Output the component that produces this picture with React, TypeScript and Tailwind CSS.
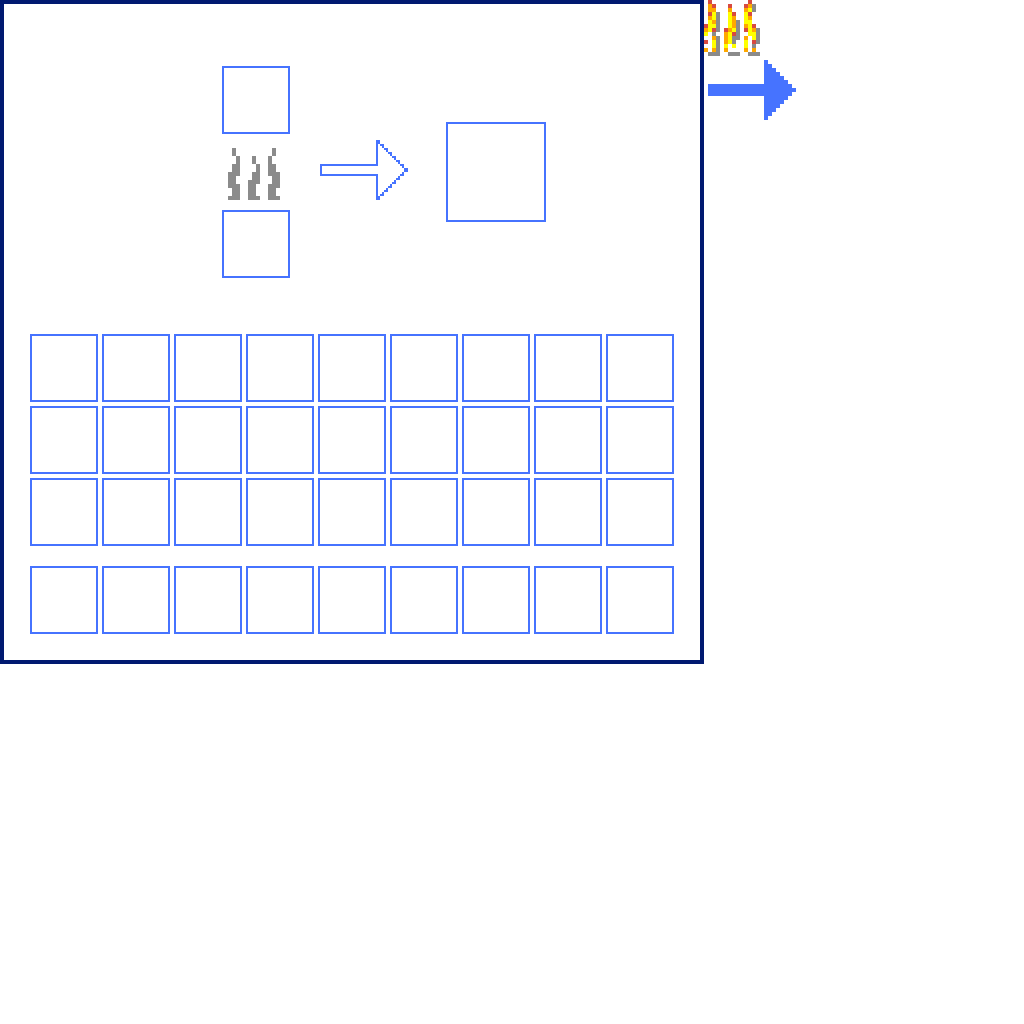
const smokeRows = [
  ".g.........g.",
  ".g.........g.",
  "..g...g...g..",
  "..g...g...g..",
  ".gg....g..gg.",
  ".gg....g..gg.",
  "ggg...gg..ggg",
  "gg....gg...gg",
  "gg...ggg...gg",
  "ggg..gg...ggg",
  ".gg..gg...gg.",
  ".gg..gg...gg.",
  "ggg..ggg..ggg",
];

const fireRows = [
  ".r.........r..",
  ".or...r...rog.",
  ".oo...o...oyg.",
  ".ryg..yr..yr..",
  ".oyg..yo..yo..",
  ".yog..yog.yy..",
  "ryyg..yog.oyr.",
  "oyrg.royg.ryog",
  "y.g..oyrg..yyg",
  "..og.oygg.o.yg",
  "r.yg.oyg..y.rg",
  "..yg.y.y..y.g.",
  "o.og.o....o.o.",
  ".ggg..ggg..ggg",
];

const colours: Record<string, string> = {
  g: "#8b8b8b",
  r: "#d84a40",
  o: "#ffa800",
  y: "#ffff00",
};

function Pixels({ rows, label }: { rows: string[]; label: string }) {
  const cols = rows[0].length;
  return (
    <svg role="img" aria-label={label} width={cols * 4} height={rows.length * 4} viewBox={`0 0 ${cols} ${rows.length}`} shapeRendering="crispEdges">
      {rows.flatMap((row, y) =>
        [...row].map((cell, x) => colours[cell] && <rect key={`${x}-${y}`} x={x} y={y} width="1" height="1" fill={colours[cell]} />)
      )}
    </svg>
  );
}

function Slot({ label }: { label: string }) {
  return <button type="button" aria-label={label} className="size-[68px] border-2 border-[#4673ff]" />;
}

function SlotRows({ rows, name }: { rows: number; name: string }) {
  return (
    <div className="grid grid-cols-[repeat(9,68px)] gap-1">
      {Array.from({ length: rows * 9 }, (_, i) => (
        <Slot key={i} label={`${name} slot ${i + 1}`} />
      ))}
    </div>
  );
}

function ArrowOutline() {
  return (
    <svg width="88" height="60" viewBox="0 0 44 30" fill="#4673ff" shapeRendering="crispEdges" aria-hidden="true">
      <path d="M0 12H28V0H30V2H29V13H1V17H29V28H30V30H28V18H0ZM42 14H44V16H42Z" />
      {[0, 2, 4, 6, 8, 10].map((i) => (
        <g key={i}>
          <path d={`M${30 + i} ${2 + i}h2v2h-1v-1h-1Z`} />
          <path d={`M${30 + i} ${28 - i}h2v-2h-1v1h-1Z`} />
        </g>
      ))}
    </svg>
  );
}

function ArrowSolid() {
  return (
    <svg width="88" height="60" viewBox="0 0 88 60" fill="#4673ff" shapeRendering="crispEdges" aria-hidden="true">
      <path d="M0 24H56V36H0Z" />
      {Array.from({ length: 15 }, (_, i) => (
        <rect key={i} x="56" y={i * 4} width={4 + Math.min(i, 14 - i) * 4} height="4" />
      ))}
    </svg>
  );
}

export default function App() {
  return (
    <main className="flex min-h-screen items-start bg-white">
      <section aria-label="Furnace" className="flex shrink-0 flex-col border-4 border-[#001970] px-[26px] pt-[62px] pb-[26px]">
        <div className="flex items-start pl-48">
          <div className="flex flex-col items-center">
            <Slot label="Input" />
            <div className="flex h-[76px] w-14 items-start pt-[14px]">
              <Pixels rows={smokeRows} label="Unlit flame" />
            </div>
            <Slot label="Fuel" />
          </div>
          <div className="ml-[30px] pt-[74px]">
            <ArrowOutline />
          </div>
          <button type="button" aria-label="Output" className="mt-14 ml-[38px] size-[100px] border-2 border-[#4673ff]" />
        </div>
        <div className="mt-14 flex flex-col gap-5">
          <SlotRows rows={3} name="Inventory" />
          <SlotRows rows={1} name="Hotbar" />
        </div>
      </section>
      <aside className="flex flex-col gap-1">
        <Pixels rows={fireRows} label="Lit flame" />
        <div className="pl-1">
          <ArrowSolid />
        </div>
      </aside>
    </main>
  );
}
